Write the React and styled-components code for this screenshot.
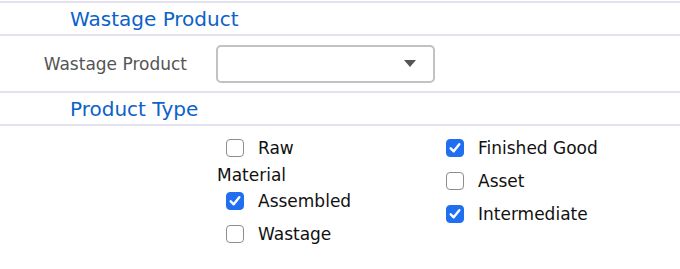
import styled, { createGlobalStyle } from 'styled-components';

const GlobalStyle = createGlobalStyle`
  body {
    margin: 0;
    background: #fff;
    font-family: 'DejaVu Sans', 'Liberation Sans', sans-serif;
  }
`;

const Page = styled.div`
  width: 680px;
  padding-top: 1px;
`;

const SectionHead = styled.div`
  height: 31px;
  display: flex;
  align-items: center;
  padding-left: 70px;
  border-top: 2px solid #e4e2ef;
  color: #0b62c9;
  font-size: 20px;
`;

const FieldRow = styled.div`
  height: 55px;
  display: grid;
  grid-template-columns: 187px 219px;
  column-gap: 29px;
  align-items: center;
  border-top: 2px solid #e4e2ef;
`;

const Label = styled.label`
  text-align: right;
  color: #555;
  font-size: 17px;
`;

const Select = styled.div`
  height: 38px;
  box-sizing: border-box;
  border: 2px solid #c2c2c2;
  border-radius: 5px;
  background: #fff;
  display: flex;
  align-items: center;
  justify-content: flex-end;
  padding-right: 17px;
`;

const Caret = styled.span`
  width: 0;
  height: 0;
  border-left: 6px solid transparent;
  border-right: 6px solid transparent;
  border-top: 7px solid #555;
`;

const CheckArea = styled.div`
  border-top: 2px solid #e4e2ef;
  padding: 6px 0 0 217px;
  display: grid;
  grid-template-columns: 220px 220px;
`;

const CheckCol = styled.div`
  max-width: ${(p) => p.$wrap}px;
`;

const Item = styled.label`
  display: block;
  font-size: 17px;
  line-height: 20px;
  color: #111;
`;

const Box = styled.span`
  display: inline-flex;
  align-items: center;
  justify-content: center;
  box-sizing: border-box;
  width: 18px;
  height: 18px;
  margin: 7px 14px 8px 9px;
  vertical-align: middle;
  border-radius: 4px;
  border: 1px solid ${(p) => (p.$checked ? '#1f6ff0' : '#8d8d8d')};
  background: ${(p) => (p.$checked ? '#1f6ff0' : '#fff')};
`;

const Check = ({ checked, children }) => (
  <Item>
    <Box $checked={checked}>
      {checked && (
        <svg width="14" height="14" viewBox="0 0 13 13">
          <path d="M2.5 6.8l2.8 2.8 5.2-6.6" fill="none" stroke="#fff" strokeWidth="2.2" strokeLinecap="round" strokeLinejoin="round" />
        </svg>
      )}
    </Box>
    {children}
  </Item>
);

const App = () => {
  return (
    <Page>
      <GlobalStyle />
      <SectionHead>Wastage Product</SectionHead>
      <FieldRow>
        <Label>Wastage Product</Label>
        <Select>
          <Caret />
        </Select>
      </FieldRow>
      <SectionHead>Product Type</SectionHead>
      <CheckArea>
        <CheckCol $wrap={140}>
          <Check>Raw Material</Check>
          <Check checked>Assembled</Check>
          <Check>Wastage</Check>
        </CheckCol>
        <CheckCol $wrap={220}>
          <Check checked>Finished Good</Check>
          <Check>Asset</Check>
          <Check checked>Intermediate</Check>
        </CheckCol>
      </CheckArea>
    </Page>
  );
};

export default App;
